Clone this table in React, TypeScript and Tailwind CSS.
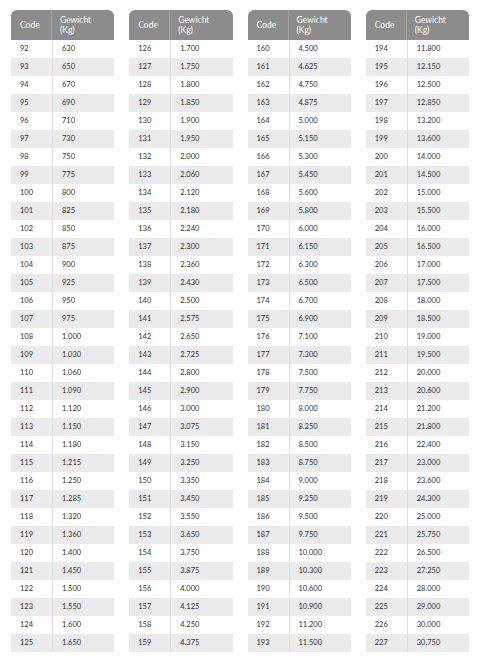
const tables: [number, string][][] = [
  [
    [92, "630"], [93, "650"], [94, "670"], [95, "690"], [96, "710"], [97, "730"], [98, "750"], [99, "775"],
    [100, "800"], [101, "825"], [102, "850"], [103, "875"], [104, "900"], [105, "925"], [106, "950"], [107, "975"],
    [108, "1.000"], [109, "1.030"], [110, "1.060"], [111, "1.090"], [112, "1.120"], [113, "1.150"], [114, "1.180"],
    [115, "1.215"], [116, "1.250"], [117, "1.285"], [118, "1.320"], [119, "1.360"], [120, "1.400"], [121, "1.450"],
    [122, "1.500"], [123, "1.550"], [124, "1.600"], [125, "1.650"],
  ],
  [
    [126, "1.700"], [127, "1.750"], [128, "1.800"], [129, "1.850"], [130, "1.900"], [131, "1.950"], [132, "2.000"],
    [133, "2.060"], [134, "2.120"], [135, "2.180"], [136, "2.240"], [137, "2.300"], [138, "2.360"], [139, "2.430"],
    [140, "2.500"], [141, "2.575"], [142, "2.650"], [143, "2.725"], [144, "2.800"], [145, "2.900"], [146, "3.000"],
    [147, "3.075"], [148, "3.150"], [149, "3.250"], [150, "3.350"], [151, "3.450"], [152, "3.550"], [153, "3.650"],
    [154, "3.750"], [155, "3.875"], [156, "4.000"], [157, "4.125"], [158, "4.250"], [159, "4.375"],
  ],
  [
    [160, "4.500"], [161, "4.625"], [162, "4.750"], [163, "4.875"], [164, "5.000"], [165, "5.150"], [166, "5.300"],
    [167, "5.450"], [168, "5.600"], [169, "5.800"], [170, "6.000"], [171, "6.150"], [172, "6.300"], [173, "6.500"],
    [174, "6.700"], [175, "6.900"], [176, "7.100"], [177, "7.300"], [178, "7.500"], [179, "7.750"], [180, "8.000"],
    [181, "8.250"], [182, "8.500"], [183, "8.750"], [184, "9.000"], [185, "9.250"], [186, "9.500"], [187, "9.750"],
    [188, "10.000"], [189, "10.300"], [190, "10.600"], [191, "10.900"], [192, "11.200"], [193, "11.500"],
  ],
  [
    [194, "11.800"], [195, "12.150"], [196, "12.500"], [197, "12.850"], [198, "13.200"], [199, "13.600"],
    [200, "14.000"], [201, "14.500"], [202, "15.000"], [203, "15.500"], [204, "16.000"], [205, "16.500"],
    [206, "17.000"], [207, "17.500"], [208, "18.000"], [209, "18.500"], [210, "19.000"], [211, "19.500"],
    [212, "20.000"], [213, "20.600"], [214, "21.200"], [215, "21.800"], [216, "22.400"], [217, "23.000"],
    [218, "23.600"], [219, "24.300"], [220, "25.000"], [221, "25.750"], [222, "26.500"], [223, "27.250"],
    [224, "28.000"], [225, "29.000"], [226, "30.000"], [227, "30.750"],
  ],
];

const WeightTable = ({ rows }: { rows: [number, string][] }) => (
  <div className="flex flex-col">
    <div className="flex h-[30px] bg-[#8c8c8c] rounded-t-[6px] text-white text-[8.5px] leading-[10px] font-normal">
      <div className="w-[41px] flex items-center pl-[9px] border-r border-[#a3a3a3]">Code</div>
      <div className="flex-1 flex items-center pl-[8px]">
        <span>
          Gewicht
          <br />
          (Kg)
        </span>
      </div>
    </div>
    {rows.map(([code, kg], i) => (
      <div
        key={code}
        className={`flex h-[18px] text-[7.5px] text-[#333] ${i % 2 === 1 ? "bg-[#ebebeb]" : "bg-white"}`}
      >
        <div className="w-[41px] flex items-center pl-[9px]">{code}</div>
        <div className="flex-1 flex items-center pl-[9px] border-l border-[#dedede]">{kg}</div>
      </div>
    ))}
  </div>
);

export default function App() {
  return (
    <div
      className="w-[480px] h-[664px] bg-white pt-[10px] px-[11px] grid grid-cols-4 gap-x-[15px] items-start"
      style={{ fontFamily: '"Lato", "Open Sans", sans-serif' }}
    >
      {tables.map((rows, i) => (
        <WeightTable key={i} rows={rows} />
      ))}
    </div>
  );
}
